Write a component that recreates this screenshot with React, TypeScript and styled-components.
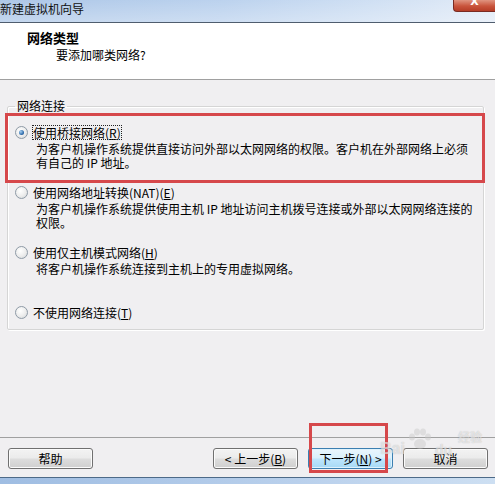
import React from 'react';
import styled, { createGlobalStyle, css } from 'styled-components';

const GlobalStyle = createGlobalStyle`
  html, body { margin: 0; padding: 0; background: #f0eff1; }
  body {
    font-family: "Noto Sans CJK SC", "Liberation Sans", sans-serif;
    font-size: 12px;
    color: #000;
  }
`;

const Window = styled.div`
  width: 495px;
  height: 484px;
  display: flex;
  flex-direction: column;
  background: #f0eff1;
  overflow: hidden;
  position: relative;
`;

const TitleBar = styled.div`
  height: 23px;
  box-sizing: border-box;
  flex: none;
  display: flex;
  align-items: flex-start;
  background: linear-gradient(to bottom, rgba(255, 255, 255, 0.1), rgba(255, 255, 255, 0.35)),
    linear-gradient(to right, #a4c1e5 0%, #b4cdec 45%, #cadcf2 75%, #dfe9f6 100%);
  border-bottom: 1px solid #4f5d6e;
`;

const TitleText = styled.div`
  padding-top: 1px;
  line-height: 15px;
  font-size: 12px;
  color: #111;
  white-space: nowrap;
`;

const CloseButton = styled.div`
  margin-left: auto;
  width: 42px;
  height: 12px;
  box-sizing: border-box;
  border: 1px solid #7a2b22;
  border-top: none;
  border-right: none;
  border-bottom-left-radius: 4px;
  background: linear-gradient(#e09480, #c9543c 55%, #b53d27);
  display: flex;
  justify-content: center;
  align-items: flex-end;
  color: #fff;
  font-family: "DejaVu Sans", sans-serif;
  font-weight: bold;
  font-size: 11px;
  line-height: 11px;
  overflow: hidden;
  padding-bottom: 4px;
`;

const Header = styled.div`
  height: 57px;
  box-sizing: border-box;
  flex: none;
  background: #fff;
  border-bottom: 1px solid #a0a0a0;
  padding: 7px 0 0 27px;
`;

const HeaderTitle = styled.div`
  font-weight: bold;
  font-size: 13px;
  line-height: 16px;
`;

const HeaderSub = styled.div`
  padding-left: 29px;
  margin-top: 1px;
  line-height: 16px;
`;

const Body = styled.div`
  flex: 1;
  padding: 19px 11px 0 7px;
`;

const GroupBox = styled.fieldset`
  margin: 0;
  padding: 12px 0 9px 1px;
  min-width: 0;
  border: 1px solid #d5d5d5;
  border-radius: 2px;
  box-shadow: inset 1px 1px 0 #fff, 1px 1px 0 #fff;
`;

const GroupLegend = styled.legend`
  margin-left: 6px;
  padding: 0 2px;
  line-height: 14px;
  font-size: 12px;
`;

const Option = styled.div<{ $highlight?: boolean; $reserve?: boolean }>`
  position: relative;
  padding-left: 6px;
  margin-bottom: 15px;
  &:last-child { margin-bottom: 0; }
  ${p => p.$reserve && css`min-height: 45px;`}
  ${p =>
    p.$highlight &&
    css`
      &::after {
        content: '';
        position: absolute;
        left: -4px;
        right: -2px;
        top: -12px;
        bottom: -13px;
        border: 3px solid #d6484b;
        pointer-events: none;
      }
    `}
`;

const RadioRow = styled.div`
  display: flex;
  align-items: center;
  gap: 4px;
  line-height: 15px;
  white-space: nowrap;
`;

const Radio = styled.span<{ $checked?: boolean }>`
  position: relative;
  flex: none;
  width: 13px;
  height: 13px;
  box-sizing: border-box;
  border-radius: 50%;
  border: 1px solid #8e9aa6;
  background: radial-gradient(circle at 40% 35%, #ffffff 0%, #ececec 55%, #cfd3d7 100%);
  ${p =>
    p.$checked &&
    css`
      &::after {
        content: '';
        position: absolute;
        left: 3px;
        top: 3px;
        width: 5px;
        height: 5px;
        border-radius: 50%;
        background: radial-gradient(circle at 35% 35%, #a6d0f2, #2a67a8 65%, #173d72);
      }
    `}
`;

const RadioLabel = styled.span<{ $focused?: boolean }>`
  padding: 0 1px;
  ${p => p.$focused && css`outline: 1px dotted #222; outline-offset: -1px;`}
`;

const Desc = styled.div`
  padding-left: 21px;
  margin-top: 2px;
  line-height: 14px;
  white-space: nowrap;
`;

const Footer = styled.div`
  flex: none;
  height: 40px;
  box-sizing: border-box;
  border-top: 1px solid #a0a0a0;
  display: flex;
  align-items: flex-start;
  gap: 10px;
  padding: 10px 7px 0 8px;
`;

const Button = styled.button<{ $primary?: boolean }>`
  width: 85px;
  height: 21px;
  box-sizing: border-box;
  padding: 0;
  border: 1px solid #707070;
  border-radius: 3px;
  background: linear-gradient(#f3f3f3 0%, #ebebeb 48%, #dddddd 52%, #cfcfcf 100%);
  box-shadow: inset 0 0 0 1px #fbfbfb;
  font-family: inherit;
  font-size: 12px;
  line-height: 17px;
  color: #000;
  ${p =>
    p.$primary &&
    css`
      border-color: #3c7fb1;
      background: linear-gradient(#eaf6fd 0%, #d9f0fc 48%, #bee6fd 52%, #a7d9f5 100%);
      box-shadow: inset 0 0 0 1px #dff2fc;
    `}
`;

const HelpButton = styled(Button)`
  margin-right: auto;
`;

const Annotated = styled.span`
  position: relative;
  display: inline-flex;
  &::after {
    content: '';
    position: absolute;
    left: 1px;
    right: 5px;
    top: -25px;
    bottom: -4px;
    border: 3px solid #d6484b;
    pointer-events: none;
  }
`;

const BottomFrame = styled.div`
  flex: none;
  height: 7px;
  box-sizing: border-box;
  border-top: 1px solid #4d6a88;
  background: linear-gradient(to right, #9fbde2, #b9d0ec 60%, #cddff2);
`;

const Watermark = styled.div`
  position: absolute;
  left: 380px;
  top: 428px;
  display: flex;
  align-items: flex-end;
  gap: 2px;
  pointer-events: none;
  color: rgba(255, 255, 255, 0.55);
  text-shadow: 0 0 1px rgba(120, 120, 120, 0.45);
  font-family: "Liberation Sans", sans-serif;
  font-weight: bold;
`;

const WatermarkWord = styled.span<{ $size: number }>`
  font-size: ${p => p.$size}px;
  line-height: ${p => p.$size + 2}px;
`;

const WatermarkCjk = styled.span`
  font-family: "Noto Sans CJK SC", sans-serif;
  font-size: 12px;
  line-height: 14px;
  margin-left: 4px;
  margin-bottom: 14px;
`;

const Paw = () => (
  <svg width="26" height="22" viewBox="0 0 26 22" style={{ marginBottom: 8 }}>
    <g fill="rgba(200,200,200,0.45)">
      <ellipse cx="5" cy="9" rx="3" ry="3.5" />
      <ellipse cx="10" cy="4" rx="3" ry="3.5" />
      <ellipse cx="16" cy="4" rx="3" ry="3.5" />
      <ellipse cx="21" cy="9" rx="3" ry="3.5" />
      <ellipse cx="13" cy="16" rx="6" ry="5" />
    </g>
  </svg>
);

export default function App() {
  return (
    <>
      <GlobalStyle />
      <Window>
        <TitleBar>
          <TitleText>新建虚拟机向导</TitleText>
          <CloseButton>X</CloseButton>
        </TitleBar>
        <Header>
          <HeaderTitle>网络类型</HeaderTitle>
          <HeaderSub>要添加哪类网络?</HeaderSub>
        </Header>
        <Body>
          <GroupBox>
            <GroupLegend>网络连接</GroupLegend>
            <Option $highlight>
              <RadioRow>
                <Radio $checked />
                <RadioLabel $focused>
                  使用桥接网络(<u>R</u>)
                </RadioLabel>
              </RadioRow>
              <Desc>
                为客户机操作系统提供直接访问外部以太网网络的权限。客户机在外部网络上必须
                <br />
                有自己的 IP 地址。
              </Desc>
            </Option>
            <Option>
              <RadioRow>
                <Radio />
                <RadioLabel>
                  使用网络地址转换(NAT)(<u>E</u>)
                </RadioLabel>
              </RadioRow>
              <Desc>
                为客户机操作系统提供使用主机 IP 地址访问主机拨号连接或外部以太网网络连接的
                <br />
                权限。
              </Desc>
            </Option>
            <Option $reserve>
              <RadioRow>
                <Radio />
                <RadioLabel>
                  使用仅主机模式网络(<u>H</u>)
                </RadioLabel>
              </RadioRow>
              <Desc>将客户机操作系统连接到主机上的专用虚拟网络。</Desc>
            </Option>
            <Option>
              <RadioRow>
                <Radio />
                <RadioLabel>
                  不使用网络连接(<u>T</u>)
                </RadioLabel>
              </RadioRow>
            </Option>
          </GroupBox>
        </Body>
        <Footer>
          <HelpButton>帮助</HelpButton>
          <Button>
            &lt; 上一步(<u>B</u>)
          </Button>
          <Annotated>
            <Button $primary>
              下一步(<u>N</u>) &gt;
            </Button>
          </Annotated>
          <Button>取消</Button>
        </Footer>
        <BottomFrame />
        <Watermark>
          <WatermarkWord $size={16}>Bai</WatermarkWord>
          <Paw />
          <WatermarkWord $size={14}>du</WatermarkWord>
          <WatermarkCjk>经验</WatermarkCjk>
        </Watermark>
      </Window>
    </>
  );
}
